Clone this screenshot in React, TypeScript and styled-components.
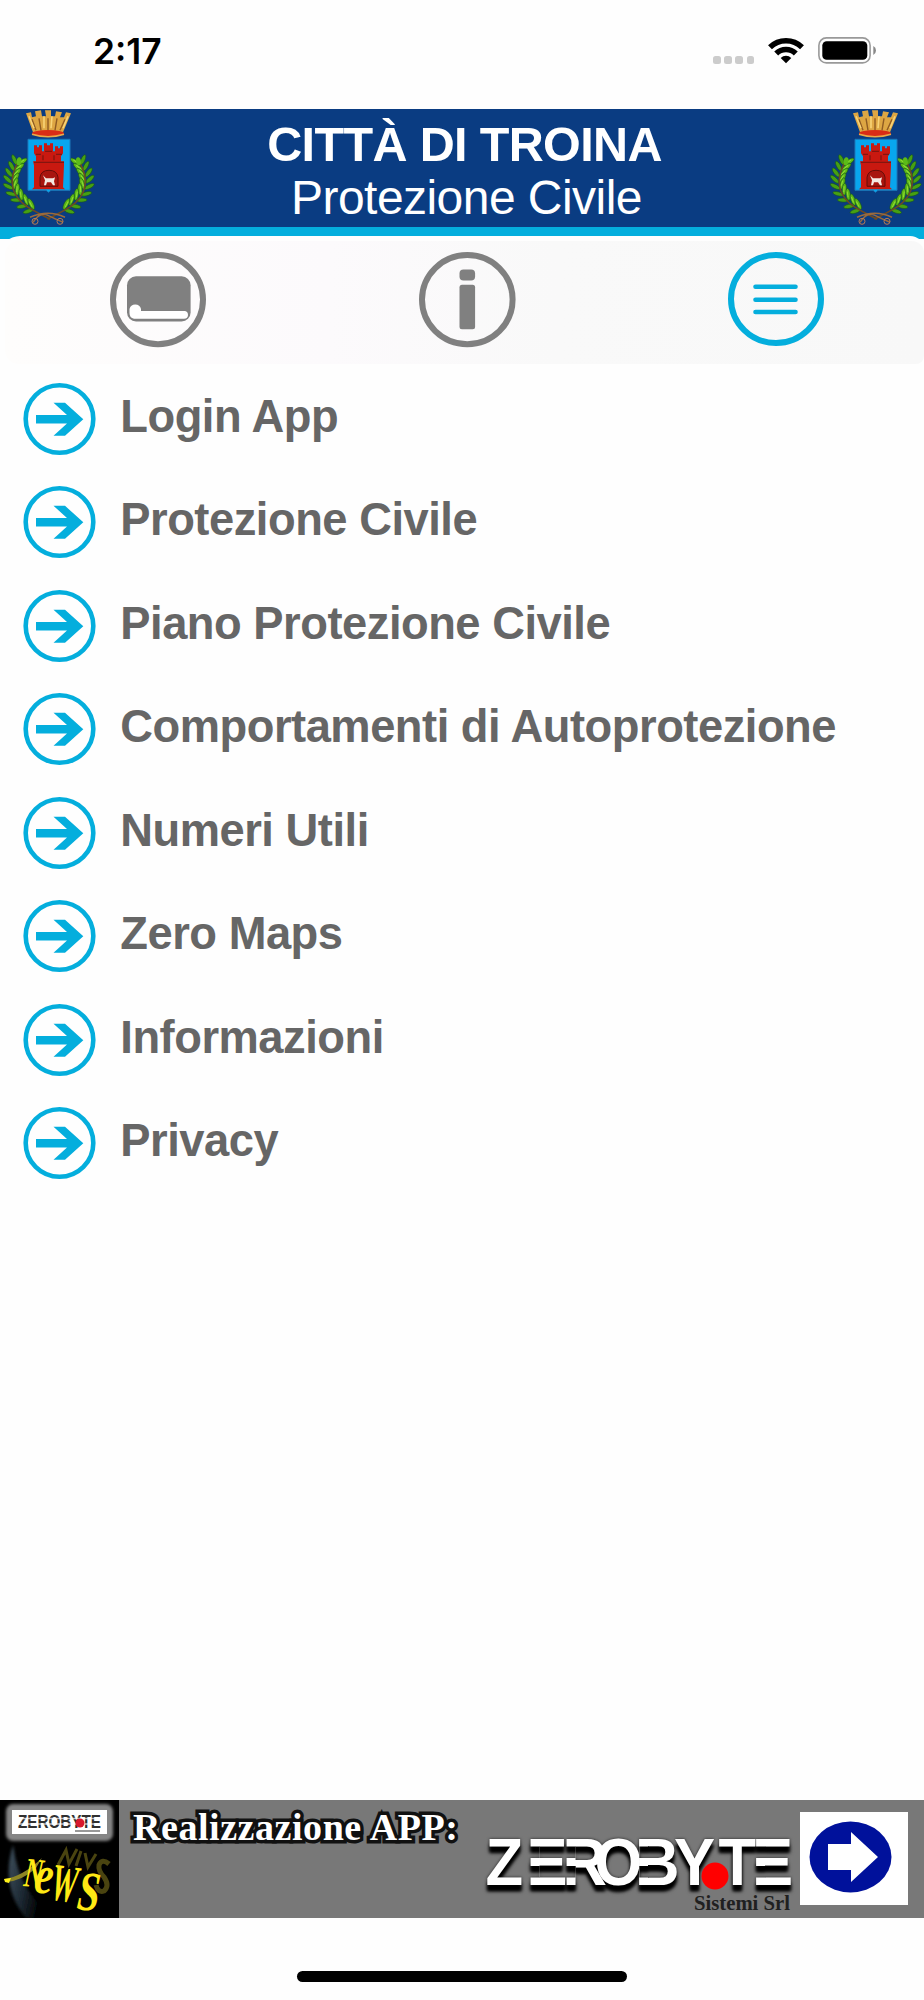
import React from 'react'
import styled, { createGlobalStyle } from 'styled-components'

const menuItems = [
  'Login App',
  'Protezione Civile',
  'Piano Protezione Civile',
  'Comportamenti di Autoprotezione',
  'Numeri Utili',
  'Zero Maps',
  'Informazioni',
  'Privacy',
];

export default function App() {
  return (
    <Screen>
      <GlobalStyle />
      <StatusBar>
        <Time>2:17</Time>
        <StatusIcons>
          <Dots><i /><i /><i /><i /></Dots>
          <WifiIcon />
          <BatteryIcon />
        </StatusIcons>
      </StatusBar>
      <Header>
        <Crest />
        <Titles>
          <Title>CITTÀ DI TROINA</Title>
          <Subtitle>Protezione Civile</Subtitle>
        </Titles>
        <Crest />
      </Header>
      <TabArea>
        <TabBar>
          <TabPanel>
            <TabIcons />
          </TabPanel>
        </TabBar>
      </TabArea>
      <Menu>
        {menuItems.map((item) => (
          <MenuItem key={item}>
            <ArrowIcon />
            <span>{item}</span>
          </MenuItem>
        ))}
      </Menu>
      <Banner>
        <NewsTile />
        <BannerText>Realizzazione APP:</BannerText>
        <Wordmark />
        <GoButton>
          <svg width="108" height="93" viewBox="0 0 108 93">
            <ellipse cx="50.5" cy="45" rx="41" ry="35.5" fill="#00119b" />
            <path d="M28 32H51V20L78 45L51 70V58H28Z" fill="#fff" />
          </svg>
        </GoButton>
      </Banner>
      <HomeArea>
        <HomeIndicator />
      </HomeArea>
    </Screen>
  )
}

function WifiIcon() {
  return (
    <svg width="36" height="27" viewBox="0 0 36 27">
      <g fill="none" stroke="#000" strokeWidth="5.6">
        <path d="M2 10.3A23 23 0 0 1 34 10.3" />
        <path d="M8.2 16.5A14 14 0 0 1 27.8 16.5" />
      </g>
      <path d="M18 26.3L12.7 21A7.6 7.6 0 0 1 23.3 21Z" />
    </svg>
  )
}

function BatteryIcon() {
  return (
    <svg width="59" height="27" viewBox="0 0 59 27">
      <rect x="0.9" y="0.9" width="51.2" height="25" rx="7.5" fill="none" stroke="#999" strokeWidth="1.6" />
      <rect x="4.3" y="4.2" width="45" height="18.6" rx="4.4" />
      <path d="M55.3 9Q58 10.5 58 13.4T55.3 18Z" fill="#888" />
    </svg>
  )
}

// x, y and direction of each leaf pair along the left branch
const leaves = [
  [17, 57, -72], [14.5, 63, -77], [12.5, 69, -85], [12, 75, -95],
  [13.5, 81, -110], [17, 87, -124], [22, 92, -136], [28, 97, -148], [34, 101, -156],
];

function Branch() {
  return (
    <g>
      {leaves.map(([x, y, angle]) => (
        <g key={y} transform={`translate(${x} ${y}) rotate(${angle})`}>
          <ellipse cx="6" cy="0" rx="5.5" ry="2" transform="rotate(-42)" fill="#46a012" stroke="#17551d" strokeWidth="0.6" />
          <ellipse cx="6" cy="0" rx="6" ry="2.2" transform="rotate(38)" fill="#5cb817" stroke="#17551d" strokeWidth="0.6" />
          <path d="M3 -0.5H9" transform="rotate(38)" stroke="#92dc35" />
        </g>
      ))}
      <path d="M50 111C36 103 20 98 14 83C10 72 13 62 19 52" fill="none" stroke="#6d4a22" strokeWidth="1.6" />
      <ellipse cx="19" cy="53" rx="2.4" ry="4" transform="rotate(10 19 53)" fill="#5cba18" />
    </g>
  )
}

function Crest() {
  return (
    <svg width="97" height="118" viewBox="0 0.7 97 118">
      <Branch />
      <g transform="translate(97.5 0) scale(-1 1)"><Branch /></g>
      <path d="M30 109Q48 101 65 109M33 114Q40 103 48 107T63 114" fill="none" stroke="#9a6a3d" strokeWidth="1.5" />
      <circle cx="35" cy="113" r="3" fill="none" stroke="#b67a55" />
      <circle cx="60" cy="113" r="3" fill="none" stroke="#b67a55" />
      <path d="M26 5L31 4L32 9L36 8L35 3L41 2L42 8L46 8L45 2H51L51 8L55 8L56 3L62 4L60 9L64 9L66 4L71 5L63 24Q48 29 33 24Z" fill="#dda643" />
      <path d="M32 11L36 22M39 10L41 22M48 10V22M57 10L55 22M65 11L60 22" stroke="#8f5b22" strokeWidth="1.4" />
      <path d="M29 8L34 20M44 8L44 20M52 8L51 20M68 8L63 20" stroke="#f8d477" strokeWidth="1.6" />
      <ellipse cx="48" cy="25" rx="16" ry="3.2" fill="#d92c16" />
      <path d="M32 26Q48 31 64 26" fill="none" stroke="#e9aa49" strokeWidth="1.6" />
      <path d="M28 31H70V82H51L48.5 84L46 82H28Z" fill="#08a6ee" stroke="#1c79ba" />
      <path d="M34 37H37V39H39V37H42V43H44V35H47V37H50V35H53V43H55V38H58V40H60V38H63V45L61 48V53H64V57L63 79L65 81H32L34 79V57L33 53H36V48L34 45Z" fill="#c91910" />
      <path d="M34 54H64M36 46H41M45 43H52M56 46H62M43 47V52M54 47V52" stroke="#84150f" strokeWidth="1.3" />
      <path d="M40 78V69Q41 62 49 62T58 69V78Z" fill="#a8150f" stroke="#650d09" />
      <path d="M43 67L46 70H53L55 69L54 73L55 77H53L51 74H47L46 77H44L45 72Z" fill="#f3e9e4" />
    </svg>
  )
}

function TabIcons() {
  return (
    <svg width="919" height="123" viewBox="5 241 919 123">
      <g fill="none" stroke="#808080" strokeWidth="6">
        <ellipse cx="158" cy="299.6" rx="45" ry="44.6" />
        <ellipse cx="467.3" cy="299.6" rx="45.3" ry="44.6" />
      </g>
      <rect x="127" y="276.3" width="63.6" height="45.2" rx="9" fill="#808080" />
      <path d="M129.5 309A5.9 5.9 0 0 1 141 309V311H185Q188 311.5 188 315T184 318.7H134Q129.5 318 129.5 313Z" fill="#fff" />
      <rect x="459.5" y="269.5" width="15.6" height="11" rx="4" fill="#808080" />
      <rect x="459.5" y="284.7" width="15.6" height="44.5" rx="2.5" fill="#808080" />
      <ellipse cx="776" cy="299" rx="45" ry="44" fill="none" stroke="#04aedd" strokeWidth="6" />
      <path d="M755.5 286.7H795.5M755.5 299.7H795.5M755.5 312H795.5" stroke="#04aedd" strokeWidth="4.6" strokeLinecap="round" />
    </svg>
  )
}

function ArrowIcon() {
  return (
    <svg width="74" height="74" viewBox="0 0 74 74">
      <circle cx="37.5" cy="37" r="33.8" fill="none" stroke="#04aedd" strokeWidth="4.6" />
      <path d="M14 33H45L31.5 20.8H43L61.3 37.3L43 53.8H31.5L45 41.5H14Z" fill="#04aedd" />
    </svg>
  )
}

function NewsTile() {
  return (
    <svg width="119" height="118" viewBox="0 0 119 118">
      <defs>
        <linearGradient id="planet" x1="0" y1="0" x2="1" y2="0.3">
          <stop offset="0" stopColor="#40515f" />
          <stop offset="0.45" stopColor="#1b2731" />
          <stop offset="0.8" stopColor="#000" />
        </linearGradient>
        <filter id="soft"><feGaussianBlur stdDeviation="1.5" /></filter>
      </defs>
      <rect width="119" height="118" fill="#000" />
      <path d="M13 45Q0 87 26 118H58Q20 98 13 45Z" fill="url(#planet)" filter="url(#soft)" />
      <rect x="6" y="4" width="107" height="37" rx="7" fill="#858585" filter="url(#soft)" />
      <rect x="12" y="10" width="95" height="24" fill="#fff" />
      <text x="18" y="28" textLength="83" lengthAdjust="spacingAndGlyphs" fontFamily="Liberation Sans, sans-serif" fontWeight="700" fontSize="19" fill="#303030">ZEROBYTE</text>
      <path d="M18 18.5H101M18 24H101" stroke="#fff" strokeWidth="1.5" opacity="0.7" />
      <circle cx="80" cy="23" r="4.5" fill="#d8182d" />
      <path d="M75 31H100" stroke="#777" strokeWidth="1.5" />
      <g fill="none" stroke="#5d5514" opacity="0.8">
        <path d="M58 65L66 50L69 64L77 49M81 51L76 66M85 53L88 67L96 54" strokeWidth="3" />
        <path d="M109 64Q102 58 99 65Q98 71 104 77Q110 86 104 91Q98 93 96 85" strokeWidth="5" />
      </g>
      <path d="M4 79Q22 77 42 58L36 68Q22 81 6 82Z" fill="#8d8525" />
      <path d="M4 79L11 78L9 83L5 82Z" fill="#fff21c" />
      <g fill="#ffe914" fontFamily="Liberation Serif, serif" fontStyle="italic" fontWeight="700">
        <text transform="translate(23 86) rotate(6) scale(.62 1)" fontSize="42">N</text>
        <text transform="translate(33 92) rotate(7) scale(.95 1.25)" fontSize="44">e</text>
        <text transform="translate(49 99) rotate(8) scale(.56 1)" fontSize="53">W</text>
        <text transform="translate(76 109) rotate(6) scale(.72 1)" fontSize="56">S</text>
      </g>
    </svg>
  )
}

// left edge of the stems that are left out between the bars of E, R, B and E
const stems = [55, 91, 164.3, 280.6];

function Wordmark() {
  return (
    <svg width="327" height="118" viewBox="0 0 327 118">
      <mask id="bars" maskUnits="userSpaceOnUse" x="0" y="0" width="327" height="118">
        <rect width="327" height="118" fill="#fff" />
        {stems.map((x) => (
          <path key={x} d={`M${x} 46.5h9.7v11.5h-9.7zM${x} 66h9.7v11.5h-9.7z`} fill="#000" />
        ))}
      </mask>
      <Letters>
        <g mask="url(#bars)">
          <text x="11.4 55.9 95 129.9 173.9 216.3 264.7 301" y="85" transform="scale(.92 1)">ZEROBYTE</text>
        </g>
      </Letters>
      <circle cx="240" cy="76" r="13.5" fill="#f00" />
      <text x="219" y="110" textLength="96" lengthAdjust="spacingAndGlyphs" fontFamily="Liberation Serif, serif" fontWeight="700" fontSize="22" fill="#202020">Sistemi Srl</text>
    </svg>
  )
}

const GlobalStyle = createGlobalStyle`
  body {
    margin: 0;
    background: #fefefe;
  }
  svg {
    display: block;
    flex: none;
  }
`;

const Screen = styled.div`
  display: flex;
  flex-direction: column;
  width: 924px;
  height: 2000px;
  overflow: hidden;
  background: #fefefe;
  font-family: 'Liberation Sans', Arial, sans-serif;
`;
const StatusBar = styled.div`
  display: flex;
  justify-content: space-between;
  box-sizing: border-box;
  height: 108.5px;
  padding: 37px 47px 0 93px;
`;
const Time = styled.div`
  font-family: Inter, sans-serif;
  font-size: 35.4px;
  font-weight: 600;
  line-height: 29px;
`;
const StatusIcons = styled.div`
  display: flex;
  align-items: flex-start;

  svg + svg {
    margin-left: 14px;
  }
`;
const Dots = styled.div`
  display: flex;
  gap: 3.6px;
  padding: 19px 14px 0 0;

  i {
    width: 7.5px;
    height: 7.5px;
    border-radius: 2.5px;
    background: #ccc;
  }
`;
const Header = styled.header`
  display: flex;
  justify-content: space-between;
  flex: none;
  height: 118px;
  background: #0a3c82;
`;
const Titles = styled.div`
  padding: 9.5px 0 0 5px;
  color: #fff;
  text-align: center;
  white-space: nowrap;
`;
const Title = styled.div`
  font-size: 48.5px;
  font-weight: 700;
  line-height: 53px;
  letter-spacing: -0.63px;
`;
const Subtitle = styled.div`
  padding-left: 4px;
  font-size: 48px;
  line-height: 53px;
  letter-spacing: -0.55px;
`;
const TabArea = styled.div`
  flex: none;
  padding-top: 9.5px;
  background: linear-gradient(#04aedd 12px, #fefefe 12px);
`;
const TabBar = styled.nav`
  height: 123px;
  padding: 5px 0 0 5px;
  border-radius: 20px 14px 0 0;
  background: #fefefe;
`;
const TabPanel = styled.div`
  border-radius: 14px 12px 8px 14px;
  background: linear-gradient(90deg, #fefdfc, #fcfafc 35%, #f9f9f9 60%, #f8f8f8);
`;
const Menu = styled.ul`
  display: flex;
  flex-direction: column;
  gap: 29.5px;
  flex: 1;
  margin: 0;
  padding: 17.5px 0 0 22px;
  list-style: none;
`;
const MenuItem = styled.li`
  display: flex;
  align-items: center;
  height: 74px;
  color: #666;
  font-size: 45.3px;
  font-weight: 700;
  line-height: 68px;
  letter-spacing: -0.48px;
  white-space: nowrap;

  span {
    margin: -4px 0 0 24.3px;
  }
`;
const Banner = styled.footer`
  display: flex;
  flex: none;
  height: 118px;
  background: #787878;
`;
const BannerText = styled.div`
  width: 356px;
  padding: 5px 0 0 14px;
  box-sizing: border-box;
  color: #fff;
  font-family: 'Liberation Serif', serif;
  font-size: 38px;
  font-weight: 700;
  line-height: 44px;
  letter-spacing: 0.55px;
  white-space: nowrap;
  -webkit-text-stroke: 7px #111;
  paint-order: stroke fill;
`;
const Letters = styled.g`
  fill: #fff;
  font-family: 'Liberation Sans', Arial, sans-serif;
  font-size: 67px;
  font-weight: 700;
  filter: drop-shadow(0 6px 1.5px #000) drop-shadow(0 0 1.5px #222);
`;
const GoButton = styled.div`
  height: 93px;
  margin: 12px 0 0 -2px;
  background: #fff;
`;
const HomeArea = styled.div`
  display: flex;
  justify-content: center;
  flex: none;
  height: 82px;
`;
const HomeIndicator = styled.div`
  width: 330px;
  height: 11px;
  margin-top: 53px;
  border-radius: 6px;
  background: #000;
`;
